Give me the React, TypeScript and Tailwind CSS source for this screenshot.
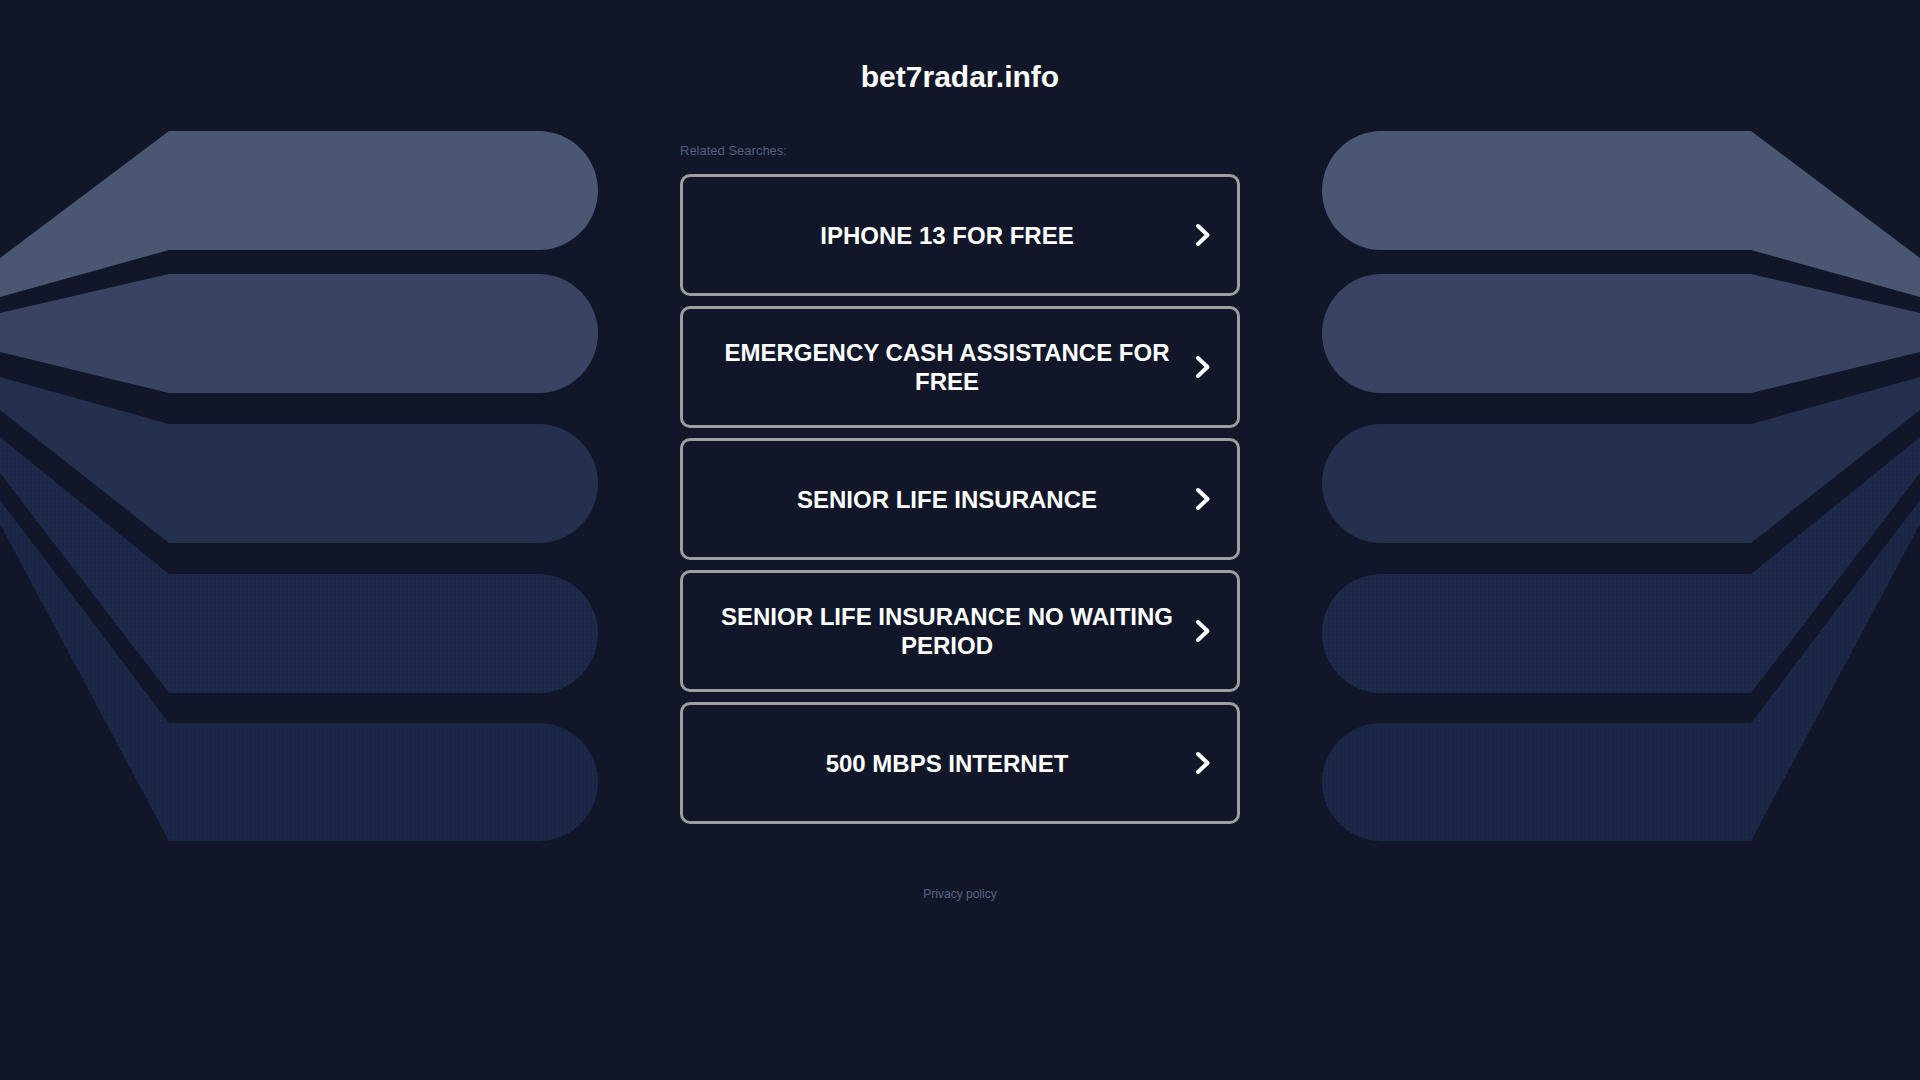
import React from "react";

const searches = [
  "IPHONE 13 FOR FREE",
  "EMERGENCY CASH ASSISTANCE FOR FREE",
  "SENIOR LIFE INSURANCE",
  "SENIOR LIFE INSURANCE NO WAITING PERIOD",
  "500 MBPS INTERNET",
];

// top / bottom of each band, and where its edges meet x = 0
const bands = [
  { t: 131, b: 250, a: 258, c: 297, fill: "#4b5673", dots: false },
  { t: 274, b: 393, a: 313, c: 352, fill: "#3a4462", dots: false },
  { t: 424, b: 543, a: 377, c: 410, fill: "#252f4e", dots: false },
  { t: 574, b: 693, a: 437, c: 473, fill: "#1d2747", dots: true },
  { t: 723, b: 841, a: 500, c: 524, fill: "#1b2544", dots: true },
];

function bandPath(t: number, b: number, a: number, c: number) {
  const r = (b - t) / 2;
  const end = 598 - r;
  return `M0 ${a} L169 ${t} L${end} ${t} A${r} ${r} 0 0 1 ${end} ${b} L169 ${b} L0 ${c} Z`;
}

function Fan({ id, flip }: { id: string; flip?: boolean }) {
  return (
    <svg
      width="598"
      height="860"
      viewBox="0 0 598 860"
      className={flip ? "shrink-0 -scale-x-100" : "shrink-0"}
    >
      <defs>
        <pattern id={id} width="4" height="4" patternUnits="userSpaceOnUse">
          <circle cx="1" cy="1" r="0.7" fill="#2a3766" />
        </pattern>
      </defs>
      {bands.map((s, i) => (
        <g key={i}>
          <path d={bandPath(s.t, s.b, s.a, s.c)} fill={s.fill} />
          {s.dots && (
            <path d={bandPath(s.t, s.b, s.a, s.c)} fill={`url(#${id})`} opacity="0.6" />
          )}
        </g>
      ))}
    </svg>
  );
}

export default function App() {
  return (
    <div
      className="w-full h-screen overflow-hidden bg-[#111729] flex justify-center items-start gap-[82px]"
      style={{ fontFamily: '"Liberation Sans", Arial, sans-serif' }}
    >
      <Fan id="dots-left" />

      <div className="w-[560px] shrink-0 flex flex-col">
        <h1 className="pt-[60px] text-center text-[30px] leading-[34px] font-bold text-white">
          bet7radar.info
        </h1>

        <p className="mt-[49px] text-[13px] leading-[15px] text-[#525e7c]">Related Searches:</p>

        <div className="mt-[16px] flex flex-col gap-[10px]">
          {searches.map((s) => (
            <a
              key={s}
              href="#"
              className="h-[122px] flex items-center pl-[16px] pr-[26px] border-[3px] border-[#9e9e9e] rounded-[10px]"
            >
              <span className="flex-1 pt-[2px] text-center text-[24px] leading-[1.2] font-bold text-white">
                {s}
              </span>
              <svg width="16" height="24" viewBox="0 0 16 24" className="shrink-0">
                <path
                  d="M3 3 L12.5 12 L3 21"
                  fill="none"
                  stroke="#ffffff"
                  strokeWidth="4"
                  strokeLinecap="round"
                  strokeLinejoin="round"
                />
              </svg>
            </a>
          ))}
        </div>

        <p className="mt-[63px] text-center text-[12px] leading-[14px] text-[#5a6380]">
          Privacy policy
        </p>
      </div>

      <Fan id="dots-right" flip />
    </div>
  );
}
